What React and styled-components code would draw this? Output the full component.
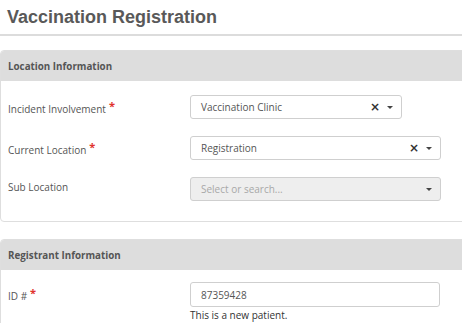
import React from "react";
import styled, { createGlobalStyle } from "styled-components";

const GlobalStyle = createGlobalStyle`
  body {
    margin: 0;
    background: #ffffff;
    overflow: hidden;
    font-family: "Open Sans", "Liberation Sans", sans-serif;
  }
`;

const Page = styled.div`
  width: 462px;
  height: 323px;
  overflow: hidden;
`;

const TitleBar = styled.div`
  height: 34px;
  border-bottom: 2px solid #dcdcdc;
  padding-left: 7px;
  display: flex;
  align-items: center;
`;

const Title = styled.h1`
  margin: 0;
  font-family: "Liberation Sans", Arial, sans-serif;
  font-size: 18px;
  font-weight: 700;
  color: #595959;
`;

const Panel = styled.section`
  margin-top: ${(p) => p.$top}px;
  margin-right: -12px;
  border: 1px solid #dedede;
  border-radius: 4px;
  overflow: hidden;
`;

const PanelHeader = styled.div`
  height: 30px;
  background: #dddddd;
  display: flex;
  align-items: center;
  padding-left: 7px;
  font-size: 9.8px;
  font-weight: 700;
  color: #555;
`;

const PanelBody = styled.div`
  display: flex;
  flex-direction: column;
  gap: 17px;
  padding: ${(p) => p.$pad};
`;

const Row = styled.div`
  display: grid;
  grid-template-columns: 182px auto;
  align-items: start;
  padding-left: 7px;
`;

const Label = styled.div`
  font-size: 10px;
  color: #555;
  padding-top: 3px;
`;

const Star = styled.span`
  color: #e0322d;
  font-size: 11px;
  font-weight: 700;
  margin-left: 3px;
  vertical-align: 3px;
`;

const Select = styled.div`
  width: ${(p) => p.$w}px;
  height: 24px;
  box-sizing: border-box;
  border: 1px solid #cfcfcf;
  border-radius: 3px;
  background: ${(p) => (p.$disabled ? "#eeeeee" : "#ffffff")};
  display: flex;
  align-items: center;
  padding: 0 8px 0 10px;
  font-size: 10px;
  color: ${(p) => (p.$disabled ? "#a8a8a8" : "#555")};
`;

const Value = styled.span`
  flex: 1;
`;

const Clear = styled.span`
  font-family: "DejaVu Sans", sans-serif;
  font-size: 12px;
  font-weight: 700;
  color: #333;
  margin-right: 7px;
  line-height: 1;
`;

const Caret = styled.span`
  width: 0;
  height: 0;
  border-left: 3px solid transparent;
  border-right: 3px solid transparent;
  border-top: 3px solid #444;
`;

const Input = styled.div`
  width: 250px;
  height: 25px;
  box-sizing: border-box;
  border: 1px solid #cfcfcf;
  border-radius: 3px;
  display: flex;
  align-items: center;
  padding-left: 10px;
  font-size: 10px;
  color: #555;
`;

const Help = styled.div`
  font-size: 10px;
  color: #333;
  margin-top: 1px;
`;

function Field({ label, required, children }) {
  return (
    <Row>
      <Label>
        {label}
        {required && <Star>*</Star>}
      </Label>
      <div>{children}</div>
    </Row>
  );
}

export default function App() {
  return (
    <Page>
      <GlobalStyle />
      <TitleBar>
        <Title>Vaccination Registration</Title>
      </TitleBar>
      <Panel $top={14}>
        <PanelHeader>Location Information</PanelHeader>
        <PanelBody $pad="14px 0 20px">
          <Field label="Incident Involvement" required>
            <Select $w={212}>
              <Value>Vaccination Clinic</Value>
              <Clear>×</Clear>
              <Caret />
            </Select>
          </Field>
          <Field label="Current Location" required>
            <Select $w={251}>
              <Value>Registration</Value>
              <Clear>×</Clear>
              <Caret />
            </Select>
          </Field>
          <Field label="Sub Location">
            <Select $w={251} $disabled>
              <Value>Select or search...</Value>
              <Caret />
            </Select>
          </Field>
        </PanelBody>
      </Panel>
      <Panel $top={17}>
        <PanelHeader>Registrant Information</PanelHeader>
        <PanelBody $pad="12px 0 20px">
          <Field label="ID #" required>
            <Input>87359428</Input>
            <Help>This is a new patient.</Help>
          </Field>
        </PanelBody>
      </Panel>
    </Page>
  );
}
